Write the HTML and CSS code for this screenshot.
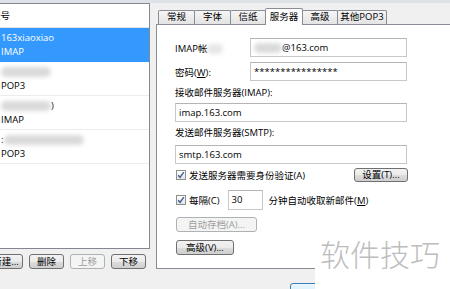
FILE: index.html
```html
<!DOCTYPE html>
<html lang="zh-CN">
<head>
    <meta charset="UTF-8">
    <title>帐号设置</title>
    <link rel="stylesheet" href="styles.css">
</head>
<body>
    <div class="top-edge"></div>
    <div class="window">
        <div class="accounts">
            <div class="account-list">
                <div class="list-head">帐号</div>
                <div class="item selected">
                    <div>163xiaoxiao</div>
                    <div>IMAP</div>
                </div>
                <div class="item">
                    <div><span class="blot w50"></span></div>
                    <div>POP3</div>
                </div>
                <div class="item">
                    <div><span class="blot w50"></span>)</div>
                    <div>IMAP</div>
                </div>
                <div class="item">
                    <div>:<span class="blot w80"></span></div>
                    <div>POP3</div>
                </div>
            </div>
            <div class="list-buttons">
                <button class="btn">新建...</button>
                <button class="btn">删除</button>
                <button class="btn disabled">上移</button>
                <button class="btn">下移</button>
            </div>
        </div>

        <div class="props">
            <div class="tabs">
                <div class="tab t1">常规</div>
                <div class="tab t2">字体</div>
                <div class="tab t3">信纸</div>
                <div class="tab active t4">服务器</div>
                <div class="tab t5">高级</div>
                <div class="tab t6">其他POP3</div>
            </div>
            <div class="panel">
                <div class="field-row">
                    <label class="field-label">IMAP帐<span class="blot soft w16"></span></label>
                    <div class="input short"><span class="blot w28"></span>@163.com</div>
                </div>
                <div class="field-row gap">
                    <label class="field-label">密码(<u>W</u>):</label>
                    <div class="input short">****************</div>
                </div>
                <div class="caption first">接收邮件服务器(IMAP):</div>
                <div class="input wide in-imap">imap.163.com</div>
                <div class="caption">发送邮件服务器(SMTP):</div>
                <div class="input wide in-smtp">smtp.163.com</div>

                <div class="check-row">
                    <span class="check-label">
                        <span class="cb"><svg width="8" height="8" viewBox="0 0 8 8"><path d="M1.2 4.2 L3.1 6.3 L6.8 1.2" fill="none" stroke="#3d5a99" stroke-width="1.4"/></svg></span>
                        发送服务器需要身份验证(A)
                    </span>
                    <button class="btn setup">设置(T)...</button>
                </div>

                <div class="interval-row">
                    <span class="check-label">
                        <span class="cb"><svg width="8" height="8" viewBox="0 0 8 8"><path d="M1.2 4.2 L3.1 6.3 L6.8 1.2" fill="none" stroke="#3d5a99" stroke-width="1.4"/></svg></span>
                        每隔(C)
                    </span>
                    <div class="input minutes">30</div>
                    <span>分钟自动收取新邮件(<u>M</u>)</span>
                </div>

                <button class="btn disabled archive">自动存档(A)...</button>
                <button class="btn advanced">高级(V)...</button>
            </div>
        </div>
    </div>

    <div class="footer">
        <button class="btn ok">确定</button>
    </div>

    <div class="watermark">软件技巧</div>
</body>
</html>
```

FILE: styles.css
```css
* {
    box-sizing: border-box;
}
body {
    margin: 0;
    width: 450px;
    height: 289px;
    overflow: hidden;
    position: relative;
    background: #f0f0f0;
    font-family: 'Open Sans', 'Noto Sans CJK SC', sans-serif;
    font-size: 9.5px;
    color: #000;
}
.top-edge {
    height: 3px;
    background: #dde2e8;
}
.window {
    display: flex;
    gap: 6px;
    height: 267px;
}

/* account list */
.accounts {
    flex: none;
    width: 164px;
    margin-left: -14px;
    display: flex;
    flex-direction: column;
}
.account-list {
    height: 246px;
    background: #fff;
    border: 1px solid #828790;
}
.list-head {
    height: 24px;
    line-height: 23px;
    padding-left: 4px;
    border-bottom: 1px solid #e3e3e3;
}
.item {
    height: 34px;
    padding: 3px 0 0 14px;
    line-height: 14px;
    border-bottom: 1px solid #ececec;
}
.item.selected {
    background: #3399ff;
    color: #fff;
    border-bottom-color: #3399ff;
}
.blot {
    display: inline-block;
    height: 10px;
    vertical-align: middle;
    background: #dadada;
    border-radius: 5px;
    filter: blur(2px);
}
.blot.soft {
    background: #e6e6e6;
}
.w16 { width: 16px; }
.w28 { width: 28px; }
.w50 { width: 50px; }
.w80 { width: 80px; }

.list-buttons {
    display: flex;
    justify-content: flex-end;
    gap: 6px;
    padding-right: 4px;
    margin-top: 5px;
}
.btn {
    height: 15px;
    padding: 0;
    border: 1px solid #707070;
    border-radius: 3px;
    background: linear-gradient(#f2f2f2 0%, #ebebeb 50%, #dddddd 51%, #cfcfcf 100%);
    font: inherit;
    line-height: 12px;
    color: #000;
    text-align: center;
}
.list-buttons .btn {
    width: 35px;
}
.btn.disabled {
    border-color: #adb2b5;
    background: #f4f4f4;
    color: #9d9d9d;
}

/* property tabs */
.props {
    flex: none;
    width: 310px;
    padding-top: 5px;
}
.tabs {
    display: flex;
    align-items: flex-end;
    height: 16px;
    padding-left: 2px;
}
.tab {
    height: 14px;
    line-height: 12px;
    text-align: center;
    border: 1px solid #898c95;
    border-bottom: none;
    border-radius: 2px 2px 0 0;
    background: linear-gradient(#f6f6f6, #e3e3e3);
    margin-right: -1px;
}
.tab.active {
    position: relative;
    z-index: 1;
    height: 17px;
    line-height: 15px;
    margin-bottom: -1px;
    background: #fff;
}
.t1 { width: 37px; }
.t2 { width: 37px; }
.t3 { width: 36px; }
.t4 { width: 38px; }
.t5 { width: 36px; }
.t6 { width: 50px; }

.panel {
    height: 245px;
    background: #fff;
    border: 1px solid #898c95;
    padding: 13px 0 0 18px;
}
.field-row {
    display: flex;
    align-items: center;
    height: 19px;
}
.field-row.gap {
    margin-top: 5px;
}
.field-label {
    width: 75px;
}
.input {
    height: 19px;
    line-height: 17px;
    padding-left: 3px;
    border: 1px solid #c8c8c8;
    border-top-color: #b4b4b4;
    background: #fff;
    white-space: nowrap;
}
.input.short {
    width: 157px;
}
.input.wide {
    width: 232px;
}
.caption {
    line-height: 14px;
    margin-top: 4px;
}
.caption.first {
    margin-top: 5px;
}
.in-imap {
    margin-top: 3px;
}
.in-smtp {
    margin-top: 5px;
}

.check-row {
    display: flex;
    align-items: center;
    justify-content: space-between;
    width: 233px;
    height: 14px;
    margin-top: 4px;
}
.check-label {
    display: flex;
    align-items: center;
    gap: 3px;
    padding-left: 1px;
}
.cb {
    width: 10px;
    height: 10px;
    border: 1px solid #8e8f8f;
    background: linear-gradient(#ffffff, #e4e4e4);
    display: flex;
    align-items: center;
    justify-content: center;
}
.btn.setup {
    width: 54px;
    height: 14px;
}
.interval-row {
    display: flex;
    align-items: center;
    height: 20px;
    margin-top: 8px;
}
.input.minutes {
    width: 35px;
    height: 20px;
    line-height: 18px;
    margin: 0 6px 0 8px;
}
.btn.archive {
    display: block;
    width: 81px;
    margin: 7px 0 0 1px;
}
.btn.advanced {
    display: block;
    width: 58px;
    margin: 8px 0 0 1px;
}

/* dialog footer */
.footer {
    padding: 13px 0 0 290px;
}
.btn.ok {
    width: 75px;
    height: 23px;
    text-align: left;
    padding-left: 17px;
    line-height: 20px;
    border-color: #3c7fb1;
    background: linear-gradient(#eaf6fd, #bee6fd);
}

.watermark {
    position: absolute;
    right: 0;
    bottom: 0;
    width: 135px;
    height: 54px;
    padding: 0 0 0 5px;
    background: #fff;
    color: #bdbdbd;
    font-family: 'Noto Sans CJK SC', sans-serif;
    font-weight: 300;
    font-size: 30px;
    line-height: 36px;
}
```
